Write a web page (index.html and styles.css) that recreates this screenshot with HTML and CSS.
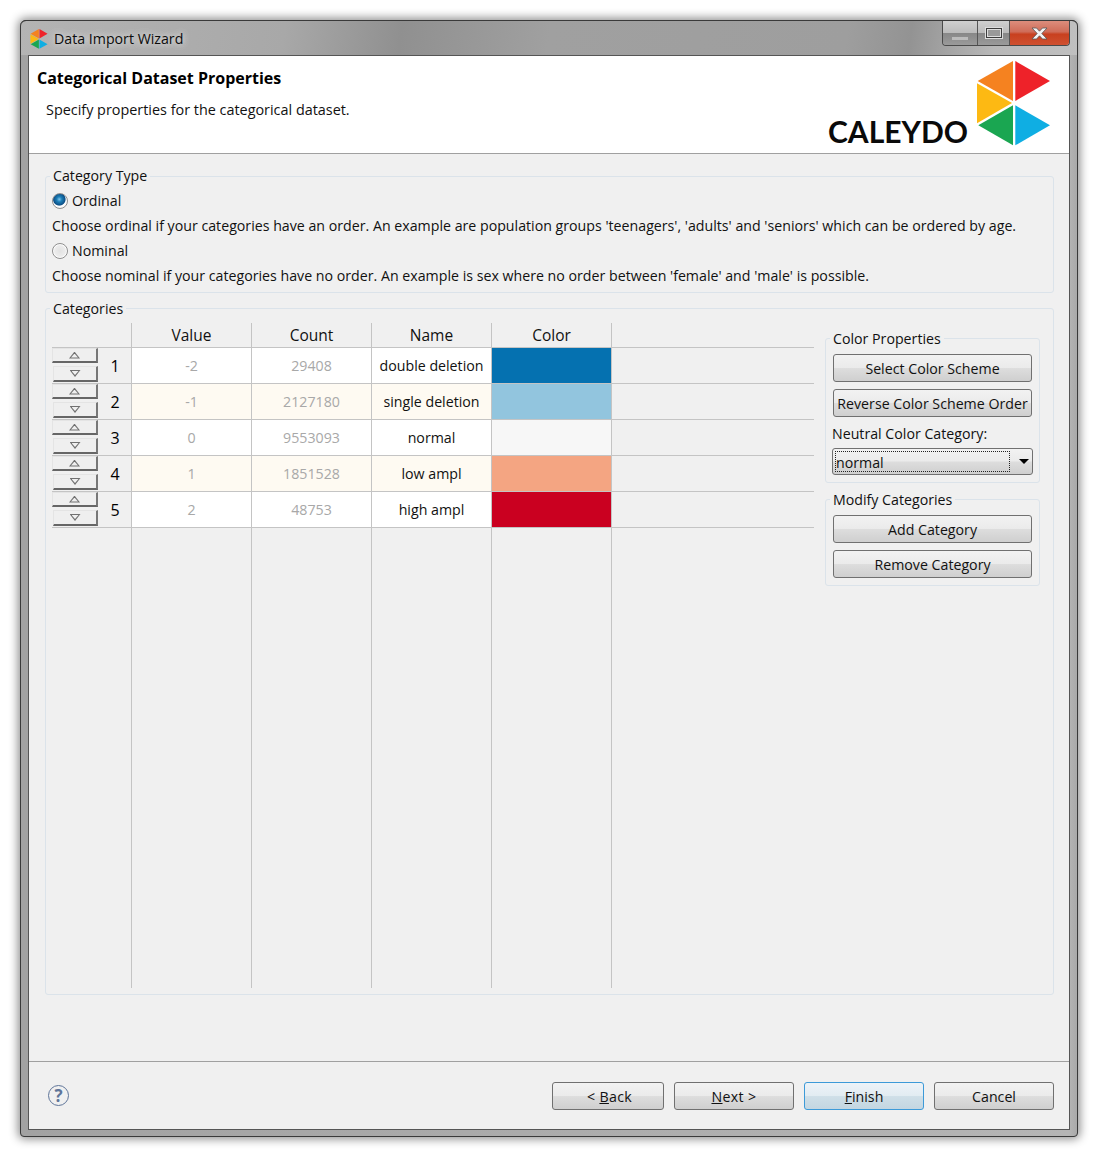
FILE: index.html
```html
<!DOCTYPE html>
<html>
<head>
    <title>Data Import Wizard</title>
    <link rel="stylesheet" href="styles.css">
</head>
<body>
    <div class="window">
        <div class="titlebar">
            <svg class="app-icon" viewBox="977 61 73 85">
                <polygon fill="#f58220" points="977.7,81 1013,61 1013,101"/>
                <polygon fill="#ee2229" points="1015.3,61 1050,81 1015.3,101"/>
                <polygon fill="#fdb913" points="977,83.3 1012,103 977,123.3"/>
                <polygon fill="#1aa651" points="978.3,125.3 1013,105.3 1013,145.3"/>
                <polygon fill="#0faee3" points="1015.3,105.3 1050,125.3 1015.3,145.3"/>
            </svg>
            <span class="title-text">Data Import Wizard</span>
            <div class="controls">
                <div class="ctl ctl-min"><span class="min-bar"></span></div>
                <div class="ctl ctl-max"><span class="max-box"></span></div>
                <div class="ctl ctl-close">
                    <svg width="17" height="13" viewBox="0 0 17 13">
                        <path d="M1 1h4.500l3 3.200 3-3.200H16l-5.200 5.500L16 12h-4.500l-3-3.200-3 3.200H1l5.200-5.500z" fill="#f4f4f4" stroke="#555" stroke-width="0.8"/>
                    </svg>
                </div>
            </div>
        </div>

        <div class="client">
            <div class="header">
                <div class="header-text">
                    <h1>Categorical Dataset Properties</h1>
                    <p>Specify properties for the categorical dataset.</p>
                </div>
                <div class="logo">
                    <span class="logo-word">CALEYDO</span>
                    <svg class="logo-mark" width="73" height="85" viewBox="977 61 73 85">
                        <polygon fill="#f58220" points="977.7,81 1013,61 1013,101"/>
                        <polygon fill="#ee2229" points="1015.3,61 1050,81 1015.3,101"/>
                        <polygon fill="#fdb913" points="977,83.3 1012,103 977,123.3"/>
                        <polygon fill="#1aa651" points="978.3,125.3 1013,105.3 1013,145.3"/>
                        <polygon fill="#0faee3" points="1015.3,105.3 1050,125.3 1015.3,145.3"/>
                    </svg>
                </div>
            </div>

            <div class="main">
                <fieldset class="group type-group">
                    <legend>Category Type</legend>
                    <div class="line"><span class="radio radio-on"></span>Ordinal</div>
                    <div class="line">Choose ordinal if your categories have an order. An example are population groups 'teenagers', 'adults' and 'seniors' which can be ordered by age.</div>
                    <div class="line"><span class="radio"></span>Nominal</div>
                    <div class="line">Choose nominal if your categories have no order. An example is sex where no order between 'female' and 'male' is possible.</div>
                </fieldset>

                <fieldset class="group cat-group">
                    <legend>Categories</legend>
                    <div class="split">
                        <div class="table">
                            <div class="row head">
                                <div class="cell"></div>
                                <div class="cell">Value</div>
                                <div class="cell">Count</div>
                                <div class="cell">Name</div>
                                <div class="cell">Color</div>
                                <div class="cell filler"></div>
                            </div>
                            <div class="row">
                                <div class="cell row-head"><div class="spin"><span class="spin-up"><i></i></span><span class="spin-down"><i></i></span></div><span class="num">1</span></div>
                                <div class="cell muted">-2</div>
                                <div class="cell muted">29408</div>
                                <div class="cell">double deletion</div>
                                <div class="cell swatch c1"></div>
                                <div class="cell filler"></div>
                            </div>
                            <div class="row tint">
                                <div class="cell row-head"><div class="spin"><span class="spin-up"><i></i></span><span class="spin-down"><i></i></span></div><span class="num">2</span></div>
                                <div class="cell muted">-1</div>
                                <div class="cell muted">2127180</div>
                                <div class="cell">single deletion</div>
                                <div class="cell swatch c2"></div>
                                <div class="cell filler"></div>
                            </div>
                            <div class="row">
                                <div class="cell row-head"><div class="spin"><span class="spin-up"><i></i></span><span class="spin-down"><i></i></span></div><span class="num">3</span></div>
                                <div class="cell muted">0</div>
                                <div class="cell muted">9553093</div>
                                <div class="cell">normal</div>
                                <div class="cell swatch c3"></div>
                                <div class="cell filler"></div>
                            </div>
                            <div class="row tint">
                                <div class="cell row-head"><div class="spin"><span class="spin-up"><i></i></span><span class="spin-down"><i></i></span></div><span class="num">4</span></div>
                                <div class="cell muted">1</div>
                                <div class="cell muted">1851528</div>
                                <div class="cell">low ampl</div>
                                <div class="cell swatch c4"></div>
                                <div class="cell filler"></div>
                            </div>
                            <div class="row">
                                <div class="cell row-head"><div class="spin"><span class="spin-up"><i></i></span><span class="spin-down"><i></i></span></div><span class="num">5</span></div>
                                <div class="cell muted">2</div>
                                <div class="cell muted">48753</div>
                                <div class="cell">high ampl</div>
                                <div class="cell swatch c5"></div>
                                <div class="cell filler"></div>
                            </div>
                            <div class="row rest">
                                <div class="cell"></div>
                                <div class="cell"></div>
                                <div class="cell"></div>
                                <div class="cell"></div>
                                <div class="cell"></div>
                                <div class="cell filler"></div>
                            </div>
                        </div>

                        <div class="side">
                            <fieldset class="group side-group">
                                <legend>Color Properties</legend>
                                <button class="btn side-btn">Select Color Scheme</button>
                                <button class="btn side-btn">Reverse Color Scheme Order</button>
                                <div class="combo-label">Neutral Color Category:</div>
                                <div class="combo">
                                    <span class="combo-text">normal</span>
                                    <span class="combo-arrow"></span>
                                </div>
                            </fieldset>
                            <fieldset class="group side-group">
                                <legend>Modify Categories</legend>
                                <button class="btn side-btn">Add Category</button>
                                <button class="btn side-btn">Remove Category</button>
                            </fieldset>
                        </div>
                    </div>
                </fieldset>
            </div>

            <div class="footer">
                <span class="help">?</span>
                <div class="footer-btns">
                    <div class="pair">
                        <button class="btn wide">&lt;&nbsp;<u>B</u>ack</button>
                        <button class="btn wide next"><u>N</u>ext &gt;</button>
                    </div>
                    <button class="btn wide primary"><u>F</u>inish</button>
                    <button class="btn wide">Cancel</button>
                </div>
            </div>
        </div>
    </div>
</body>
</html>
```

FILE: styles.css
```css
html, body {
    margin: 0;
    padding: 0;
    background: #fff;
}

body {
    padding: 20px;
    font-family: "Open Sans", "Noto Sans", sans-serif;
    font-size: 14.2px;
    color: #111;
}

.window {
    box-sizing: border-box;
    width: 1058px;
    height: 1117px;
    padding: 0 8px 7px 8px;
    border-radius: 6px 6px 4px 4px;
    outline: 1px solid #3a3a3a;
    outline-offset: -1px;
    background: linear-gradient(90deg, #a2a2a2 0, #a2a2a2 9px, #b5b5b5 1049px, #a8a8a8 100%);
    box-shadow: 0 0 10px 2px rgba(0, 0, 0, 0.45);
}

.titlebar {
    display: flex;
    align-items: center;
    height: 35px;
    margin: 0 -8px;
    padding: 0 8px 0 10px;
    box-sizing: border-box;
    border-radius: 6px 6px 0 0;
    border-top: 1px solid #333;
    background: linear-gradient(98deg, #b4b4b4 0, #a8a8a8 25%, #a4a4a4 27%, #909090 36%, #a0a0a0 50%, #9e9e9e 78%, #939393 84%, #b8b8b8 92%, #c0c0c0 100%);
}

.app-icon {
    width: 18px;
    height: 20px;
    margin-top: 2px;
}

.title-text {
    margin-left: 6px;
    color: #0c0c0c;
    text-shadow: 0 0 7px #ddd, 0 0 7px #ddd;
}

.controls {
    display: flex;
    align-self: flex-start;
    margin-left: auto;
    height: 24px;
    border: 1px solid #4a4a4a;
    border-top: 0;
    border-radius: 0 0 4px 4px;
    overflow: hidden;
}

.ctl {
    box-sizing: border-box;
    display: flex;
    align-items: center;
    justify-content: center;
    background: linear-gradient(#d0d0d0 0, #bcbcbc 48%, #888 52%, #9a9a9a 100%);
    border-right: 1px solid #555;
}

.ctl-min {
    width: 35px;
}

.ctl-max {
    width: 32px;
}

.ctl-close {
    width: 59px;
    border-right: 0;
    background: linear-gradient(#dc8d7c 0, #cf6c58 45%, #c8401f 55%, #cf5030 100%);
}

.min-bar {
    width: 16px;
    height: 3px;
    margin-top: 11px;
    background: #bcbcbc;
}

.max-box {
    box-sizing: border-box;
    width: 16px;
    height: 10px;
    border: 1px solid #3c3c3c;
    outline: 1px solid #ddd;
    background: #999;
    box-shadow: inset 0 0 0 1px #ddd;
}

.client {
    box-sizing: border-box;
    display: flex;
    flex-direction: column;
    height: 1075px;
    border: 1px solid #555;
    background: #f0f0f0;
}

.header {
    box-sizing: border-box;
    display: flex;
    justify-content: space-between;
    height: 98px;
    border-bottom: 1px solid #a0a0a0;
    background: #fff;
}

.header-text {
    padding: 10px 0 0 8px;
}

.header-text h1 {
    margin: 0;
    font-size: 16px;
    font-weight: 700;
    line-height: 24px;
    color: #000;
}

.header-text p {
    margin: 10px 0 0 9px;
    font-size: 14.4px;
    line-height: 20px;
}

.logo {
    display: flex;
    align-items: flex-start;
    padding: 5px 19px 0 0;
}

.logo-word {
    margin: 52px 9px 0 0;
    font-family: Lato, "Open Sans", sans-serif;
    font-size: 30px;
    font-weight: 700;
    line-height: 36px;
    color: #0a0a0a;
}

.main {
    box-sizing: border-box;
    flex: 1;
    padding: 12px 15px 0 16px;
}

.group {
    margin: 0;
    min-width: 0;
    border: 1px solid #dbe3ea;
    border-radius: 3px;
    padding: 0 6px;
}

.group legend {
    margin-left: -2px;
    padding: 0 3px;
    line-height: 20px;
}

.type-group {
    padding: 2px 6px 4px;
}

.line {
    display: flex;
    align-items: center;
    height: 25px;
}

.radio {
    box-sizing: border-box;
    width: 16px;
    height: 16px;
    margin-right: 4px;
    border: 1px solid #8e8e8e;
    border-radius: 50%;
    background: radial-gradient(circle at 50% 50%, #e2e2e2 0, #ececec 55%, #fff 68%, #e4e4e4 100%);
}

.radio-on {
    background: radial-gradient(circle at 45% 38%, #7fc4ea 0, #1c7fb8 22%, #0d4f86 50%, #fff 58%, #e8e8e8 100%);
}

.cat-group {
    margin-top: 4px;
    padding: 4px 13px 6px 6px;
}

.cat-group legend,
.side-group legend {
    padding-top: 2px;
}

.split {
    display: flex;
}

.table {
    display: flex;
    flex-direction: column;
    width: 762px;
    height: 665px;
}

.row {
    display: grid;
    grid-template-columns: 80px 120px 120px 120px 120px 1fr;
    height: 36px;
    box-sizing: border-box;
    border-bottom: 1px solid #c4c4c4;
    background: #fff;
}

.row.tint {
    background: #fefaf2;
}

.row.head {
    height: 25px;
    background: #f0f0f0;
}

.row.rest {
    flex: 1;
    border-bottom: 0;
    background: #f0f0f0;
}

.cell {
    box-sizing: border-box;
    display: flex;
    align-items: center;
    justify-content: center;
    border-right: 1px solid #c4c4c4;
}

.head .cell {
    font-size: 15.5px;
}

.cell.filler {
    border-right: 0;
    background: #f0f0f0;
}

.row-head {
    justify-content: flex-start;
    align-items: flex-start;
    background: #f0f0f0;
}

.muted {
    color: #a8a8a8;
}

.swatch.c1 { background: #0571b0; }
.swatch.c2 { background: #92c5de; }
.swatch.c3 { background: #f7f7f7; }
.swatch.c4 { background: #f4a582; }
.swatch.c5 { background: #ca0020; }

.spin {
    display: flex;
    flex-direction: column;
    gap: 3px;
    width: 46px;
}

.spin span {
    display: flex;
    align-items: center;
    justify-content: center;
    box-sizing: border-box;
    height: 15px;
    background: #efefef;
    border-top: 1px solid #e4e4e4;
    border-left: 1px solid #e4e4e4;
    border-right: 2px solid #777;
    border-bottom: 2px solid #666;
}

.spin-up i,
.spin-down i {
    position: relative;
    display: block;
    width: 11px;
    height: 7px;
    background: #707070;
}

.spin-up i {
    clip-path: polygon(50% 0, 100% 100%, 0 100%);
}

.spin-down i {
    clip-path: polygon(0 0, 100% 0, 50% 100%);
}

/* hollow centre of the arrow */
.spin-up i::after,
.spin-down i::after {
    content: "";
    position: absolute;
    left: 2px;
    width: 7px;
    height: 4px;
    background: #efefef;
}

.spin-up i::after {
    top: 2px;
    clip-path: polygon(50% 0, 100% 100%, 0 100%);
}

.spin-down i::after {
    top: 1px;
    clip-path: polygon(0 0, 100% 0, 50% 100%);
}

.spin .spin-down {
    width: 45px;
    height: 16px;
    margin-left: 1px;
}

.num {
    flex: 1;
    align-self: center;
    padding-left: 1px;
    text-align: center;
    font-size: 16px;
    color: #000;
}

.side {
    display: flex;
    flex-direction: column;
    gap: 5px;
    width: 215px;
    margin: 4px 0 0 11px;
}

.side-group {
    padding: 5px 7px 7px;
}

.side-group legend {
    margin-left: -3px;
}

.btn {
    box-sizing: border-box;
    display: block;
    padding: 0;
    height: 28px;
    border: 1px solid #707070;
    border-radius: 3px;
    font-family: inherit;
    font-size: 14.2px;
    color: #111;
    background: linear-gradient(#f2f2f2 0, #ebebeb 48%, #dddddd 52%, #cfcfcf 100%);
}

.side-btn {
    width: 199px;
}

.side-btn + .side-btn {
    margin-top: 7px;
}

.combo-label {
    margin: 7px 0 4px -1px;
    line-height: 20px;
}

.combo {
    box-sizing: border-box;
    display: flex;
    align-items: center;
    width: 201px;
    height: 27px;
    margin-left: -1px;
    border: 1px solid #707070;
    border-radius: 3px;
    background: linear-gradient(#f2f2f2 0, #ebebeb 48%, #dddddd 52%, #cfcfcf 100%);
}

.combo-text {
    box-sizing: border-box;
    width: 175px;
    height: 21px;
    margin-left: 2px;
    line-height: 21px;
    border: 1px dotted #222;
}

.combo-arrow {
    margin-left: 9px;
    width: 0;
    height: 0;
    border-left: 5px solid transparent;
    border-right: 5px solid transparent;
    border-top: 5px solid #000;
}

.footer {
    box-sizing: border-box;
    display: flex;
    justify-content: space-between;
    height: 68px;
    border-top: 1px solid #a0a0a0;
    padding: 20px 15px 0 19px;
}

.help {
    box-sizing: border-box;
    display: flex;
    align-items: center;
    justify-content: center;
    width: 21px;
    height: 21px;
    margin-top: 3px;
    border: 1px solid #5f7599;
    border-radius: 50%;
    font-size: 17px;
    font-weight: 700;
    color: #5f7599;
}

.footer-btns {
    display: flex;
    gap: 10px;
}

.pair {
    display: flex;
}

.wide {
    width: 120px;
}

.pair .wide {
    width: 112px;
    padding-left: 3px;
    letter-spacing: 0.35px;
}

.pair .next {
    width: 120px;
    margin-left: 10px;
    padding-left: 0;
}

.primary {
    border-color: #3c9ad8;
    background: linear-gradient(#edf3f8 0, #e2ecf2 48%, #cfdfe8 52%, #c3d6e1 100%);
}
```
